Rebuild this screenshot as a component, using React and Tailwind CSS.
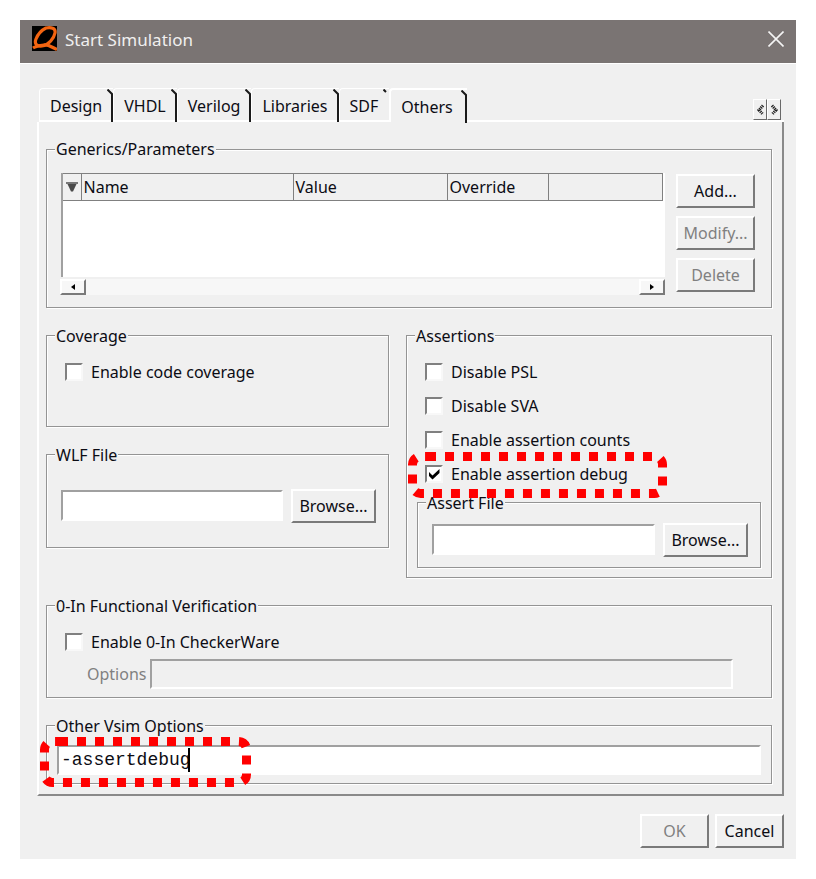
import { useState } from 'react'

const TABS = ['Design', 'VHDL', 'Verilog', 'Libraries', 'SDF', 'Others']

const COLUMNS = [
  { label: 'Name', width: 'w-[212px]' },
  { label: 'Value', width: 'w-[154px]' },
  { label: 'Override', width: 'w-[101px]' },
  { label: '', width: 'w-auto' },
]

const SUNKEN = 'border-2 border-t-[#a0a0a0] border-l-[#a0a0a0] border-r-white border-b-white'
const RAISED = 'border-2 border-t-white border-l-white border-r-[#7a7a7a] border-b-[#7a7a7a]'

function Group({ title, className = '', children }) {
  return (
    <fieldset className={`relative min-w-0 border border-[#949494] shadow-[inset_1px_1px_0_#fff,1px_1px_0_#fff] ${className}`}>
      <legend className="ml-2 px-px h-5 leading-5 bg-[#f0f0f0] whitespace-nowrap">{title}</legend>
      {children}
    </fieldset>
  )
}

function Button({ children, disabled, className = '' }) {
  return (
    <button
      type="button"
      disabled={disabled}
      className={`h-[34px] shrink-0 leading-5 whitespace-nowrap disabled:text-[#808080] ${RAISED} ${className}`}
    >
      {children}
    </button>
  )
}

function Check({ label, defaultChecked = false }) {
  const [on, setOn] = useState(defaultChecked)
  return (
    <label className="flex h-[34px] items-center gap-2">
      <span className="relative block size-[18px]">
        <input
          type="checkbox"
          checked={on}
          onChange={e => setOn(e.target.checked)}
          className="block size-[18px] appearance-none border-2 border-t-[#808080] border-l-[#808080] border-r-[#f8f8f8] border-b-[#f8f8f8] bg-white"
        />
        {on && (
          <svg viewBox="0 0 18 18" className="pointer-events-none absolute inset-0 size-[18px]">
            <path d="M4 7 L7.500 10.500 L14.500 4 V8 L7.500 14.500 L4 11 Z" fill="#000" />
          </svg>
        )}
      </span>
      {label}
    </label>
  )
}

function FileRow({ label }) {
  return (
    <div className="flex items-center gap-2">
      <input type="text" aria-label={label} className={`h-[31px] min-w-0 flex-1 bg-white px-1 ${SUNKEN}`} />
      <Button className="w-[85px]">Browse...</Button>
    </div>
  )
}

function TabEdge({ open }) {
  return (
    <svg viewBox="0 0 6 34" className="absolute top-0 right-0 h-[34px] w-[6px]" fill="none" stroke="#1a1a1a">
      <path d={open ? 'M0.500 0.500 L3 3' : 'M0.500 0.500 L5 5 V33'} strokeWidth="2" />
    </svg>
  )
}

function ScrollTab({ label, d }) {
  return (
    <button
      type="button"
      aria-label={label}
      className="flex h-[21px] w-[14px] items-center justify-center border border-t-white border-l-white border-r-[#696969] border-b-[#696969]"
    >
      <svg viewBox="0 0 9 12" className="h-3 w-[9px]" fill="none" stroke="#222" strokeWidth="3" strokeDasharray="1.200 0.800">
        <path d={d} />
      </svg>
    </button>
  )
}

function Callout({ d, width, height, className }) {
  return (
    <svg width={width} height={height} className={`pointer-events-none absolute z-10 ${className}`}>
      <path d={d} fill="none" stroke="#ff0000" strokeWidth="9" strokeDasharray="9 9" />
    </svg>
  )
}

function ParameterList() {
  return (
    <div className="min-w-0 flex-1">
      <div className="border-l-2 border-[#a0a0a0] bg-white pr-0.5">
        <table className="w-full table-fixed border-collapse">
          <thead>
            <tr className="h-[27px] bg-[#f0f0f0]">
              <th className="w-[18px] border border-l-0 border-[#808080] p-0">
                <svg viewBox="0 0 14 12" className="ml-0.5 h-3 w-[14px]">
                  <path d="M2 2 H12 L8 10.500 H6 Z" fill="#4a4a4a" />
                  <path d="M1 2 H13" stroke="#777" strokeWidth="2" />
                </svg>
              </th>
              {COLUMNS.map((c, i) => (
                <th key={i} className={`border border-[#808080] p-0 pl-0.5 text-left leading-5 font-normal ${c.width}`}>
                  {c.label}
                </th>
              ))}
            </tr>
          </thead>
          <tbody>
            <tr className="h-[76px]"><td colSpan={5} /></tr>
          </tbody>
        </table>
      </div>
      <div className="mt-0.5 flex justify-between bg-[#f7f7f7]">
        <button type="button" aria-label="Scroll left" className={`-ml-px flex h-4 w-[26px] items-center justify-center ${RAISED}`}>
          <svg viewBox="0 0 4 6" className="h-1.5 w-1"><path d="M4 0 V6 L0 3 Z" /></svg>
        </button>
        <button type="button" aria-label="Scroll right" className={`flex h-4 w-[26px] items-center justify-center ${RAISED}`}>
          <svg viewBox="0 0 4 6" className="h-1.5 w-1"><path d="M0 0 V6 L4 3 Z" /></svg>
        </button>
      </div>
    </div>
  )
}

export default function App() {
  const [tab, setTab] = useState('Others')
  const [options, setOptions] = useState('-assertdebug')

  return (
    <div className="min-h-screen bg-white p-5 text-[16px] text-[#0c0c14] font-['Noto_Sans',sans-serif]">
      <div className="bg-[#f0f0f0]">
        <header className="flex h-[43px] items-center gap-2 bg-[#7a7473] px-3 pb-1">
          <svg viewBox="0 0 25 25" className="-mt-0.5 size-[25px]">
            <rect width="25" height="25" fill="#000" />
            <g fill="none" stroke="#f26411" strokeWidth="3.200">
              <path d="M14 2 C19 1 24 2 23 7 C22 12 17 19 10 20 C5 20.500 2 18 4 13 C6 8 10 4 14 2 Z" />
              <path d="M1 22 C4 20 8 19.500 12 19 C17 18.500 19 21 25 23.500" />
            </g>
          </svg>
          <h1 className="flex-1 text-[17px] leading-6 text-[#f0efef]">Start Simulation</h1>
          <button type="button" aria-label="Close" className="-mt-0.5">
            <svg viewBox="0 0 16 16" className="size-4" stroke="#f4f4f4" strokeWidth="1.600">
              <path d="M0.500 0.500 L15.500 15.500 M15.500 0.500 L0.500 15.500" />
            </svg>
          </button>
        </header>

        <main className="border-t border-white px-[17px] pt-6 pr-3 pb-[11px]">
          <div className="flex items-stretch pl-0.5">
            <div role="tablist" className="flex items-end">
              {TABS.map((t, i) => {
                const active = t === tab
                return (
                  <button
                    key={t}
                    type="button"
                    role="tab"
                    aria-selected={active}
                    onClick={() => setTab(t)}
                    className={`relative h-[34px] rounded-tl-[4px] border-white pt-0.5 pl-[10px] leading-5 ${
                      active ? 'border-t-2 border-l-2 pr-[14px]' : 'border-t border-l border-b-2 pr-[11px]'
                    }`}
                  >
                    {t}
                    <TabEdge open={TABS[i + 1] === tab} />
                  </button>
                )
              })}
            </div>
            <div className="flex flex-1 items-end justify-end border-b-2 border-white pr-[3px]">
              <ScrollTab label="Previous tabs" d="M7 1.500 L3 6 L7 10.500" />
              <ScrollTab label="Next tabs" d="M2 1.500 L6 6 L2 10.500" />
            </div>
          </div>

          <section className="flex flex-col gap-[18px] border-2 border-t-0 border-l-white border-r-[#8a8a8a] border-b-[#8a8a8a] px-[7px] pt-[17px] pr-[10px] pb-[10px]">
            <Group title="Generics/Parameters">
              <div className="flex gap-[11px] pt-[14px] pr-4 pb-3 pl-[14px]">
                <ParameterList />
                <div className="flex flex-col gap-2 pt-px">
                  <Button className="w-[79px]">Add...</Button>
                  <Button className="w-[79px]" disabled>Modify...</Button>
                  <Button className="w-[79px]" disabled>Delete</Button>
                </div>
              </div>
            </Group>

            <div className="grid grid-cols-[minmax(0,343fr)_minmax(0,366fr)] items-start gap-[17px]">
              <div className="flex flex-col gap-[18px]">
                <Group title="Coverage">
                  <div className="pt-[9px] pb-[37px] pl-[18px]">
                    <Check label="Enable code coverage" />
                  </div>
                </Group>
                <Group title="WLF File">
                  <div className="pt-6 pr-3 pb-6 pl-[14px]">
                    <FileRow label="WLF File" />
                  </div>
                </Group>
              </div>

              <Group title="Assertions">
                <div className="px-[10px] pt-[9px] pb-[9px]">
                  <div className="relative px-2">
                    <Check label="Disable PSL" />
                    <Check label="Disable SVA" />
                    <Check label="Enable assertion counts" />
                    <Check label="Enable assertion debug" defaultChecked />
                    <Callout
                      width={260}
                      height={47}
                      className="bottom-[-8px] left-[-9px]"
                      d="M19 4.500 H246.500 A8 8 0 0 1 254.500 12.500 V33.500 A8 8 0 0 1 246.500 41.500 H12.500 A8 8 0 0 1 4.500 33.500 V12.500 A8 8 0 0 1 12.500 4.500 Z"
                    />
                  </div>
                  <Group title="Assert File" className="mt-0.5">
                    <div className="py-[10px] pr-3 pl-[14px]">
                      <FileRow label="Assert File" />
                    </div>
                  </Group>
                </div>
              </Group>
            </div>

            <Group title="0-In Functional Verification">
              <div className="pt-[9px] pr-[38px] pb-2 pl-[18px]">
                <Check label="Enable 0-In CheckerWare" />
                <div className="flex items-center gap-1 pl-[22px]">
                  <label htmlFor="zin-options" className="leading-5 text-[#808080]">Options</label>
                  <input id="zin-options" type="text" disabled className={`h-[30px] min-w-0 flex-1 px-1 ${SUNKEN}`} />
                </div>
              </div>
            </Group>

            <Group title="Other Vsim Options">
              <div className="relative px-[10px] pt-[9px] pb-2">
                <input
                  type="text"
                  aria-label="Other Vsim Options"
                  value={options}
                  onChange={e => setOptions(e.target.value)}
                  spellCheck={false}
                  className={`block h-[30px] w-full bg-white px-0.5 text-[18px] font-['Liberation_Mono',monospace] ${SUNKEN}`}
                />
                {/* text cursor */}
                <span className="absolute top-3 left-[141px] h-6 w-0.5 bg-black" />
                <Callout
                  width={212}
                  height={51}
                  className="top-px left-[-7px]"
                  d="M19 4.500 H198.500 A8 8 0 0 1 206.500 12.500 V37.500 A8 8 0 0 1 198.500 45.500 H12.500 A8 8 0 0 1 4.500 37.500 V12.500 A8 8 0 0 1 12.500 4.500 Z"
                />
              </div>
            </Group>
          </section>

          <footer className="mt-[18px] flex justify-end gap-1.5">
            <Button className="w-[69px]" disabled>OK</Button>
            <Button className="w-[69px]">Cancel</Button>
          </footer>
        </main>
      </div>
    </div>
  )
}
